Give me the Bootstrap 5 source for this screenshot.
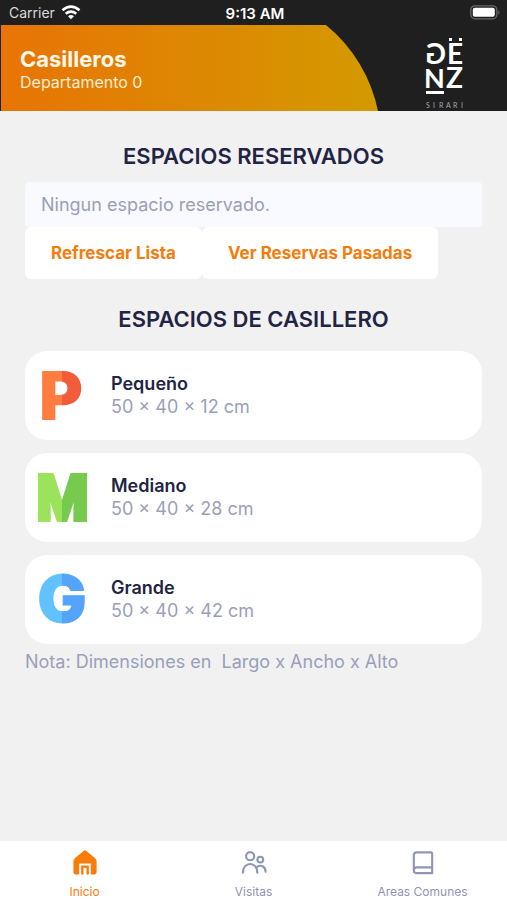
<!DOCTYPE html>
<html lang="es">
<head>
<meta charset="utf-8">
<meta name="viewport" content="width=device-width, initial-scale=1">
<title>Casilleros</title>
<link href="https://cdn.jsdelivr.net/npm/bootstrap@5.3.0/dist/css/bootstrap.min.css" rel="stylesheet">
<style>
body { font-family: Inter, "Liberation Sans", sans-serif; background: #f1f1f1; color: #222444; }
.status-bar { background: #1f1f1f; height: 25px; padding: 0 6px 0 9px; font-size: 14px; line-height: 27px; color: #fff; }
.status-bar > * { flex: 1 1 0; }
.status-bar .carrier { color: #d8d8d8; gap: 6px; }
.status-bar time { font-size: 15px; font-weight: 600; }
.hero { background: #1f1f1f; height: 86px; padding: 0 42px 0 20px; }
.hero-copy { padding-top: 21px; }
.hero-title { font-size: 22px; line-height: 26px; font-weight: 700; color: #fff8ea; }
.hero-sub { font-size: 16px; line-height: 20px; color: #ffeed0; }
.page-body { padding: 31px 25px 0; }
.section-title { font-size: 22px; line-height: 28px; font-weight: 600; }
.empty-note { background: #f8faff; color: #9aa0b6; font-size: 18px; line-height: 27px; padding: 9px 16px; margin-top: 12px; border-radius: 4px; }
.btn-flat { --bs-btn-bg: #fff; --bs-btn-color: #f57c0b; --bs-btn-hover-bg: #fff; --bs-btn-hover-color: #d96800; --bs-btn-border-width: 0; --bs-btn-border-radius: 6px; --bs-btn-font-weight: 700; --bs-btn-font-size: 17px; --bs-btn-line-height: 24px; --bs-btn-padding-x: 26px; --bs-btn-padding-y: 14px; line-height: 24px; }
.locker-title { margin: 26px 0 18px; }
.locker-list { gap: 13px; }
.locker { border-radius: 22px; padding: 0 13px; gap: 24px; }
.locker-name { font-size: 18px; line-height: 22px; font-weight: 600; }
.muted-text { color: #9a9fba; font-size: 18px; line-height: 23px; }
.locker-note { margin-top: 6px; }
.tab-bar { background: #fff; height: 59px; }
.tab-bar a { flex: 1 1 0; color: #8e96b4; font-size: 12px; line-height: 16px; padding-top: 7px; gap: 7px; }
.tab-bar a.current { color: #fb7b0b; }
</style>
</head>
<body>
<div class="d-flex flex-column min-vh-100">
  <div class="status-bar d-flex">
    <div class="carrier d-flex align-items-center">Carrier
      <svg width="20" height="15" viewBox="0 0 20 15" fill="none" stroke="#fff" stroke-width="2.6" aria-hidden="true"><path d="M1.5 5.2Q10-2 18.5 5.2M4.7 8.7Q10 4.4 15.3 8.7"/><path d="M7 11.2Q10 8.8 13 11.2L10 14.3Z" fill="#fff" stroke="none"/></svg>
    </div>
    <time class="text-center">9:13 AM</time>
    <div class="d-flex justify-content-end align-items-center">
      <svg width="31" height="15" viewBox="0 0 31 15" aria-hidden="true"><rect x=".8" y=".8" width="26" height="13" rx="4" fill="none" stroke="#68686a" stroke-width="1.3"/><rect x="2.8" y="2.8" width="22" height="9" rx="2" fill="#fff"/><path d="M28.3 5Q30.7 7.3 28.3 9.8Z" fill="#68686a"/></svg>
    </div>
  </div>
  <header class="hero position-relative d-flex justify-content-between overflow-hidden">
    <svg class="position-absolute top-0 start-0" width="379" height="86" viewBox="0 0 379 86" aria-hidden="true">
      <defs><linearGradient id="amber"><stop stop-color="#e87405"/><stop offset="1" stop-color="#d39a00"/></linearGradient></defs>
      <path d="M1 0H326A150 150 0 0 1 378 86H1Z" fill="url(#amber)"/>
    </svg>
    <div class="hero-copy position-relative">
      <h1 class="hero-title m-0">Casilleros</h1>
      <div class="hero-sub">Departamento 0</div>
    </div>
    <svg class="position-relative" width="42" height="86" viewBox="0 0 42 86" fill="#fff" font-family="Lato, sans-serif" font-weight="700" aria-label="GËNZ SIRARI">
      <text transform="translate(23 39) scale(-1 1)" font-size="28">G</text>
      <text x="24" y="39" font-size="28">E</text>
      <text x="1" y="63" font-size="27">N</text>
      <text x="23" y="63" font-size="28">Z</text>
      <path d="M26 13h3v3h-3zM36 13h3v3h-3zM3 66h18v3H3z"/>
      <text x="3 10 16 23 30 38" y="83" font-size="7" font-weight="400" fill="#a8a8a8">SIRARI</text>
    </svg>
  </header>

  <main class="page-body flex-grow-1">
    <h2 class="section-title text-center mb-0">ESPACIOS RESERVADOS</h2>
    <div class="empty-note">Ningun espacio reservado.</div>
    <div class="d-flex flex-wrap">
      <button type="button" class="btn btn-flat">Refrescar Lista</button>
      <button type="button" class="btn btn-flat">Ver Reservas Pasadas</button>
    </div>
    <h2 class="section-title locker-title text-center">ESPACIOS DE CASILLERO</h2>
    <div class="d-grid locker-list">
      <article class="locker d-flex align-items-center bg-white">
        <svg width="49" height="89" viewBox="0 0 49 89" role="img" aria-label="P"><defs><linearGradient id="pf" gradientUnits="userSpaceOnUse" x1="0" x2="49" y1="0" y2="0"><stop offset=".5" stop-color="#ff7d40"/><stop offset=".5" stop-color="#f25c3b"/></linearGradient></defs><text x="1" y="69" font-family="Inter" font-size="67" font-weight="900" fill="url(#pf)">P</text></svg>
        <div><div class="locker-name">Pequeño</div><div class="muted-text">50 × 40 × 12 cm</div></div>
      </article>
      <article class="locker d-flex align-items-center bg-white">
        <svg width="49" height="89" viewBox="0 0 49 89" role="img" aria-label="M"><defs><linearGradient id="mf" gradientUnits="userSpaceOnUse" x1="0" x2="49" y1="0" y2="0"><stop offset=".5" stop-color="#9be35a"/><stop offset=".5" stop-color="#76cb4f"/></linearGradient></defs><text x="24" y="67" text-anchor="middle" font-family="'Liberation Sans Narrow', Roboto, sans-serif" font-size="63" font-weight="900" fill="url(#mf)" stroke="url(#mf)" stroke-width="4">M</text></svg>
        <div><div class="locker-name">Mediano</div><div class="muted-text">50 × 40 × 28 cm</div></div>
      </article>
      <article class="locker d-flex align-items-center bg-white">
        <svg width="49" height="89" viewBox="0 0 49 89" role="img" aria-label="G"><defs><linearGradient id="gf" gradientUnits="userSpaceOnUse" x1="0" x2="49" y1="0" y2="0"><stop offset=".5" stop-color="#61c2ff"/><stop offset=".5" stop-color="#55a4fb"/></linearGradient></defs><text x="24" y="67" text-anchor="middle" font-family="Inter" font-size="65" font-weight="900" fill="url(#gf)" stroke="url(#gf)">G</text></svg>
        <div><div class="locker-name">Grande</div><div class="muted-text">50 × 40 × 42 cm</div></div>
      </article>
    </div>
    <p class="muted-text locker-note mb-0">Nota: Dimensiones en &nbsp;Largo x Ancho x Alto</p>
  </main>

  <nav class="tab-bar d-flex">
    <a href="#inicio" class="current d-flex flex-column align-items-center text-decoration-none" aria-current="page">
      <svg width="30" height="30" viewBox="0 0 30 30" aria-hidden="true"><path fill="currentColor" d="M13.500 3Q15 1.800 16.500 3L25.500 10.500Q27 11.800 27 14V25Q27 27.500 24.500 27.500H21V16H9V27.500H5.500Q3 27.500 3 25V14Q3 11.800 4.500 10.500Z"/><path fill="currentColor" d="M11 18h8v9.500h-2.500v-7h-3v7H11z"/></svg>
      Inicio</a>
    <a href="#visitas" class="d-flex flex-column align-items-center text-decoration-none">
      <svg width="30" height="30" viewBox="0 0 30 30" fill="none" stroke="currentColor" stroke-width="2.2" stroke-linecap="round" aria-hidden="true"><circle cx="11" cy="8.5" r="4.200"/><circle cx="21.500" cy="12" r="3"/><path d="M3.500 25.500C3.500 13.500 18.500 13.500 18.500 25.500M18.200 19.500C22.500 16.800 27 19.500 27 24.500"/></svg>
      Visitas</a>
    <a href="#areas" class="d-flex flex-column align-items-center text-decoration-none">
      <svg width="30" height="30" viewBox="0 0 30 30" fill="none" stroke="currentColor" stroke-width="2.2" stroke-linejoin="round" aria-hidden="true"><path d="M8.500 4.500H23Q24.500 4.500 24.500 6V26H8Q5.500 26 5.500 23V7.500Q5.500 4.500 8.500 4.500ZM5.500 22.500Q6 20 8.500 20H24.500"/></svg>
      Areas Comunes</a>
  </nav>
</div>
<script src="https://cdn.jsdelivr.net/npm/bootstrap@5.3.0/dist/js/bootstrap.bundle.min.js"></script>
</body>
</html>
